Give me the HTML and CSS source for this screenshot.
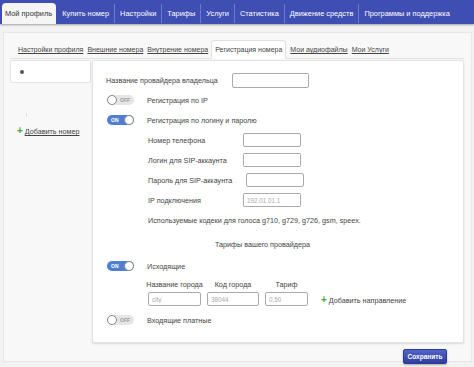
FILE: index.html
```html
<!DOCTYPE html>
<html lang="ru">
<head>
<meta charset="utf-8">
<link rel="stylesheet" href="styles.css">
</head>
<body>
<nav class="topnav">
  <a class="nav-item active">Мой профиль</a>
  <a class="nav-item">Купить номер</a>
  <a class="nav-item">Настройки</a>
  <a class="nav-item">Тарифы</a>
  <a class="nav-item">Услуги</a>
  <a class="nav-item">Статистика</a>
  <a class="nav-item">Движение средств</a>
  <a class="nav-item last">Программы и поддержка</a>
</nav>
<div class="container">
  <div class="subtabs">
    <a class="subtab">Настройки профиля</a>
    <a class="subtab">Внешние номера</a>
    <a class="subtab">Внутрение номера</a>
    <a class="subtab active">Регистрация номера</a>
    <a class="subtab">Мои аудиофайлы</a>
    <a class="subtab">Мои Услуги</a>
  </div>
  <div class="content">
    <aside class="side">
      <div class="side-top"><span class="dot"></span></div>
      <div class="side-rest">
        <span class="tick"></span>
        <a class="add-link"><span class="plus">+</span> <span class="ul">Добавить номер</span></a>
      </div>
    </aside>
    <main class="panel">
      <div class="row">
        <span class="label-owner">Название провайдера владельца</span>
        <input class="inp inp-owner" type="text">
      </div>
      <div class="row">
        <span class="toggle off"><span class="knob"></span><span class="ttext">OFF</span></span>
        <span class="toggle-label">Регистрация по IP</span>
      </div>
      <div class="row">
        <span class="toggle on"><span class="ttext">ON</span><span class="knob"></span></span>
        <span class="toggle-label">Регистрация по логину и паролю</span>
      </div>
      <div class="row sub">
        <span class="sub-label">Номер телефона</span>
        <input class="inp inp-sub" type="text">
      </div>
      <div class="row sub">
        <span class="sub-label">Логин для SIP-аккаунта</span>
        <input class="inp inp-sub" type="text">
      </div>
      <div class="row sub">
        <span class="sub-label wide">Пароль для SIP-аккаунта</span>
        <input class="inp inp-sub" type="text">
      </div>
      <div class="row sub">
        <span class="sub-label">IP подключения</span>
        <input class="inp inp-sub" type="text" placeholder="192.01.01.1">
      </div>
      <div class="row sub">
        <span>Используемые кодеки для голоса g710, g729, g726, gsm, speex.</span>
      </div>
      <div class="row heading">Тарифы вашего провайдера</div>
      <div class="row toggle-row2">
        <span class="toggle on"><span class="ttext">ON</span><span class="knob"></span></span>
        <span class="toggle-label">Исходящие</span>
      </div>
      <div class="tariffs">
        <div class="tcol c1"><span class="tlabel">Название города</span><input class="inp" type="text" placeholder="city"></div>
        <div class="tcol c2"><span class="tlabel">Код города</span><input class="inp" type="text" placeholder="38044"></div>
        <div class="tcol c3"><span class="tlabel">Тариф</span><input class="inp" type="text" placeholder="0,50"></div>
        <a class="add-dir"><span class="plus">+</span> Добавить направление</a>
      </div>
      <div class="row toggle-row3">
        <span class="toggle off"><span class="knob"></span><span class="ttext">OFF</span></span>
        <span class="toggle-label">Входящие платные</span>
      </div>
    </main>
  </div>
  <div class="actions">
    <button class="save" type="button">Сохранить</button>
  </div>
</div>
</body>
</html>
```
FILE: styles.css
```css
* { box-sizing: border-box; }
html, body { margin: 0; padding: 0; }
body {
  background: #f2f2f2;
  font-family: "Liberation Sans", Arial, sans-serif;
  font-size: 7.2px;
  color: #444;
  width: 474px;
  height: 367px;
  overflow: hidden;
}
.topnav {
  display: flex;
  height: 24px;
  background: #3f4eb3;
  padding: 3px 0 0 2px;
  box-shadow: 0 1px 2px rgba(0,0,0,0.35);
  position: relative;
  white-space: nowrap;
}
.nav-item {
  display: flex;
  align-items: center;
  flex-shrink: 0;
  height: 19px;
  padding: 0 5px;
  color: #fff;
  font-size: 7.4px;
  border-right: 1px solid #6d7ac8;
  margin-top: 1px;
}
.nav-item.last { border-right: none; }
.nav-item.active {
  background: #f5f5f5;
  color: #333;
  border-radius: 4px 4px 0 0;
  border-right: none;
  height: 21px;
  margin-top: 0;
  padding: 0 4px 0 3px;
  margin-right: 1px;
}
.container {
  margin: 8px 2px 0 3px;
  height: 330px;
  border: 1px solid #e8e8e8;
  background: #f8f8f8;
  padding: 7px 0 0 6px;
}
.subtabs {
  display: flex;
  align-items: flex-end;
  height: 19px;
  width: 454px;
  border-bottom: 1px solid #e2e2e2;
  padding-left: 6px;
  white-space: nowrap;
}
.subtab {
  color: #444;
  text-decoration: underline;
  font-size: 7px;
  padding: 0 2px;
  margin-right: 0;
  line-height: 16px;
}
.subtab.active {
  text-decoration: none;
  background: #fff;
  border: 1px solid #e0e0e0;
  border-bottom: 1px solid #fff;
  border-radius: 4px 4px 0 0;
  padding: 0 3px;
  margin: 0 2px -1px 1px;
  height: 19px;
  line-height: 17px;
}
.content {
  display: flex;
  margin-top: 1px;
}
.side {
  width: 81px;
  display: flex;
  flex-direction: column;
}
.side-top {
  height: 23px;
  background: #fff;
  border: 1px solid #e4e4e4;
  border-radius: 2px;
  display: flex;
  align-items: center;
  padding-left: 9px;
}
.dot {
  width: 4px;
  height: 4px;
  border-radius: 50%;
  background: #555;
}
.side-rest {
  position: relative;
  padding-top: 42px;
  padding-left: 7px;
  white-space: nowrap;
}
.tick {
  position: absolute;
  left: 16px;
  top: 30px;
  width: 1px;
  height: 4px;
  background: #ddd;
}
.add-link {
  color: #444;
  font-size: 7.2px;
}
.ul { text-decoration: underline; }
.plus {
  color: #45a845;
  font-weight: bold;
  font-size: 10px;
  display: inline-block;
}
.panel {
  width: 372px;
  height: 283px;
  margin-left: 1px;
  background: #fff;
  border: 1px solid #e3e3e3;
  border-radius: 2px;
  box-shadow: 0 1px 2px rgba(0,0,0,0.12);
  padding: 9px 0 0 13px;
  white-space: nowrap;
}
.row {
  display: flex;
  align-items: center;
  height: 20px;
}
.label-owner { width: 126px; }
.inp {
  border: 1px solid #aaa;
  border-radius: 2px;
  height: 14px;
  font-family: "Liberation Sans", Arial, sans-serif;
  font-size: 6.3px;
  padding: 0 3px;
  background: #fff;
  color: #333;
}
.inp::placeholder { color: #aaa; }
.inp-owner { width: 77px; height: 15px; }
.toggle {
  width: 27px;
  height: 10px;
  border-radius: 6px;
  display: flex;
  align-items: center;
  margin-left: 1px;
  margin-right: 13px;
  font-size: 5px;
  font-weight: bold;
}
.toggle.on { background: #4f7fd1; justify-content: space-between; padding-left: 4px; }
.toggle.off { background: #e6e6e6; }
.knob {
  width: 10px;
  height: 10px;
  border-radius: 50%;
  background: #fff;
  border: 1px solid #888;
}
.toggle.on .ttext { color: #fff; }
.toggle.off .ttext { color: #999; margin-left: 3px; }
.sub { padding-left: 42px; }
.sub-label { width: 95px; }
.sub-label.wide { width: 98px; }
.inp-sub { width: 58px; }
.heading {
  padding-left: 109px;
  margin-top: 4px;
}
.toggle-row2 { margin-top: 2px; }
.tariffs {
  display: flex;
  align-items: flex-end;
  padding-left: 42px;
  margin-top: 1px;
  height: 29px;
}
.tcol {
  display: flex;
  flex-direction: column;
  align-items: center;
  margin-right: 6px;
}
.tlabel { line-height: 12px; margin-bottom: 1px; }
.c1 { width: 53px; }
.c2 { width: 52px; }
.c3 { width: 43px; }
.tcol .inp { width: 100%; }
.add-dir {
  margin-left: 7px;
  margin-bottom: 1px;
  color: #444;
  font-size: 7.2px;
}
.toggle-row3 { margin-top: 4px; }
.actions {
  display: flex;
  justify-content: flex-end;
  padding-right: 24px;
  margin-top: 6px;
}
.save {
  width: 44px;
  height: 15px;
  border: 1px solid #2a3a9a;
  border-radius: 2px;
  background: linear-gradient(#5264c8, #2e3d9e);
  color: #fff;
  font-family: "Liberation Sans", Arial, sans-serif;
  font-size: 6.5px;
  font-weight: bold;
  padding: 0;
  box-shadow: 0 1px 2px rgba(0,0,0,0.3);
}
```
